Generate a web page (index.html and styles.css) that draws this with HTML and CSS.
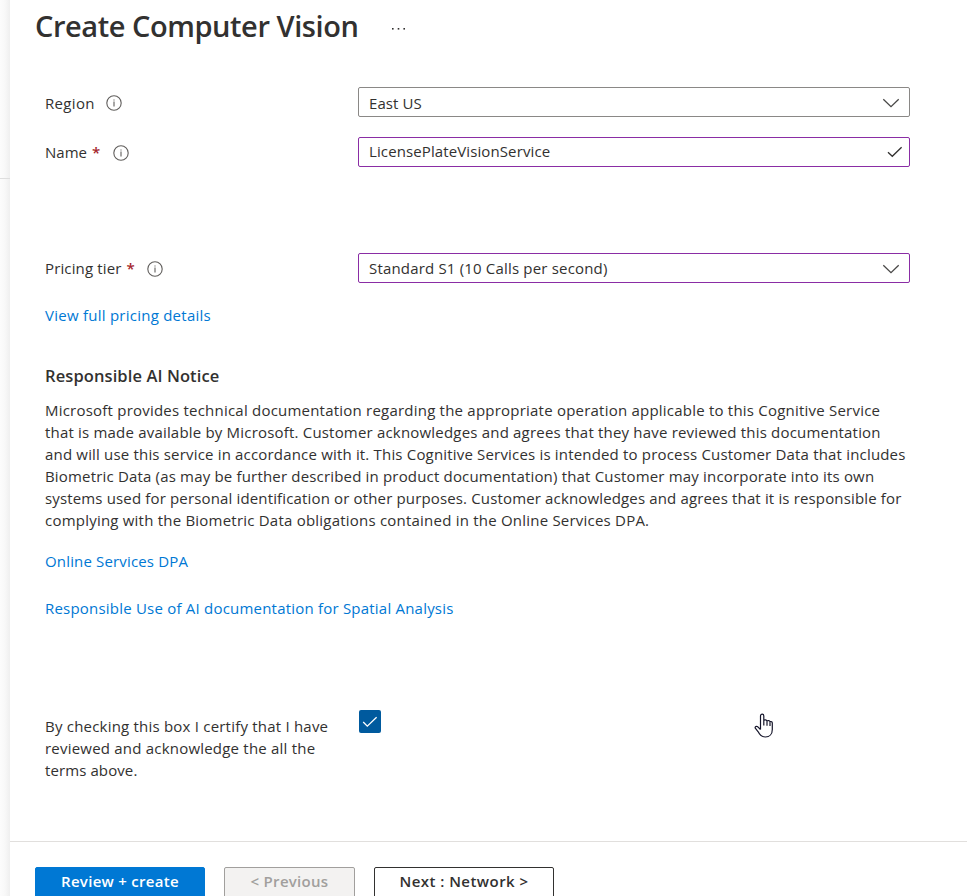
FILE: index.html
```html
<!DOCTYPE html>
<html lang="en">
<head>
<meta charset="utf-8">
<title>Create Computer Vision</title>
<link rel="stylesheet" href="styles.css">
</head>
<body>
<div class="app">
  <aside class="edge"><div class="edge-line"></div></aside>
  <div class="blade">
    <header class="header">
      <h1 class="title">Create Computer Vision</h1>
      <svg class="more" width="16" height="4" viewBox="0 0 16 4" fill="#323130"><rect x="1" y="1" width="1.600" height="1.600"/><rect x="6.700" y="1" width="1.600" height="1.600"/><rect x="12.400" y="1" width="1.600" height="1.600"/></svg>
    </header>

    <main class="content">
      <div class="field">
        <div class="label"><span class="ls-region">Region</span>
          <svg class="info" width="16" height="16" viewBox="0 0 16 16"><circle cx="8" cy="8" r="7.200" fill="none" stroke="#605e5c" stroke-width="1.100"/><path d="M8 6.500V11.500M8 4.500V5.500" stroke="#605e5c" stroke-width="1.100"/></svg>
        </div>
        <div class="input"><span class="ls-east">East US</span>
          <svg class="chevron" width="18" height="10" viewBox="0 0 18 10"><path d="M1.300 1.200L9 8.600L16.700 1.200" fill="none" stroke="#494847" stroke-width="1.300"/></svg>
        </div>
      </div>

      <div class="field field-name">
        <div class="label"><span class="ls-name">Name</span><span class="req">*</span>
          <svg class="info" width="16" height="16" viewBox="0 0 16 16"><circle cx="8" cy="8" r="7.200" fill="none" stroke="#605e5c" stroke-width="1.100"/><path d="M8 6.500V11.500M8 4.500V5.500" stroke="#605e5c" stroke-width="1.100"/></svg>
        </div>
        <div class="input edited"><span class="ls-license">LicensePlateVisionService</span>
          <svg class="valid" width="16" height="12" viewBox="0 0 16 12"><path d="M1 6.200L5.300 10.300L14.600 1.200" fill="none" stroke="#323130" stroke-width="1.300"/></svg>
        </div>
      </div>

      <div class="field field-tier">
        <div class="label"><span class="ls-tier">Pricing tier</span><span class="req">*</span>
          <svg class="info" width="16" height="16" viewBox="0 0 16 16"><circle cx="8" cy="8" r="7.200" fill="none" stroke="#605e5c" stroke-width="1.100"/><path d="M8 6.500V11.500M8 4.500V5.500" stroke="#605e5c" stroke-width="1.100"/></svg>
        </div>
        <div class="input edited"><span class="ls-standard">Standard S1 (10 Calls per second)</span>
          <svg class="chevron" width="18" height="10" viewBox="0 0 18 10"><path d="M1.300 1.200L9 8.600L16.700 1.200" fill="none" stroke="#494847" stroke-width="1.300"/></svg>
        </div>
      </div>

      <a class="link link-pricing">View full pricing details</a>

      <h2 class="notice-title">Responsible AI Notice</h2>
      <p class="notice">
        <span class="line n1">Microsoft provides technical documentation regarding the appropriate operation applicable to this Cognitive Service</span>
        <span class="line n2">that is made available by Microsoft. Customer acknowledges and agrees that they have reviewed this documentation</span>
        <span class="line n3">and will use this service in accordance with it. This Cognitive Services is intended to process Customer Data that includes</span>
        <span class="line n4">Biometric Data (as may be further described in product documentation) that Customer may incorporate into its own</span>
        <span class="line n5">systems used for personal identification or other purposes. Customer acknowledges and agrees that it is responsible for</span>
        <span class="line n6">complying with the Biometric Data obligations contained in the Online Services DPA.</span>
      </p>

      <a class="link link-dpa">Online Services DPA</a>
      <a class="link link-use">Responsible Use of AI documentation for Spatial Analysis</a>

      <div class="confirm">
        <p class="confirm-text">
          <span class="line c1">By checking this box I certify that I have</span>
          <span class="line c2">reviewed and acknowledge the all the</span>
          <span class="line c3">terms above.</span>
        </p>
        <div class="checkbox"><svg width="16" height="12" viewBox="0 0 16 12"><path d="M1.200 6L5.300 10.200L14.600 1.200" fill="none" stroke="#fff" stroke-width="1.300"/></svg></div>
      </div>
    </main>

    <footer class="footer">
      <button class="btn primary">Review + create</button>
      <button class="btn disabled">&lt; Previous</button>
      <button class="btn next">Next : Network &gt;</button>
    </footer>
  </div>
  <svg class="cursor" width="20" height="26" viewBox="0 0 20 26"><path d="M6.500 16.500V3C6.500 .500 9.800 .500 9.800 3V7.300C10.500 6.600 12.500 6.700 13 7.900C14 7.200 15.500 7.500 16 8.600C17.500 8.200 18.300 9 18.300 10.300V16.500C18.300 21 15.500 24 11.500 24C7.500 24 5.500 21.500 4.200 18.800L1.300 15.200C.600 13.700 2.400 12.700 3.800 13.800L6.500 16.500M9.800 7V12.500M13 8V12.800M16 9V13" fill="#fff" stroke="#15152a" stroke-width="1.200" stroke-linejoin="round"/></svg>
</div>
</body>
</html>
```
FILE: styles.css
```css
* { box-sizing: border-box; }
body { margin: 0; background: #fff; color: #323130; font: 15px/22px "Open Sans", sans-serif; overflow: hidden; }
h1, h2, p { margin: 0; }
.app { display: flex; height: 896px; position: relative; overflow: hidden; }
.edge { width: 10px; flex: none; background: linear-gradient(to right, #fcfcfc, #f8f8f8 50%, #efefef); }
.edge-line { height: 179px; border-bottom: 1px solid #dedede; }
.blade { flex: 1; min-width: 0; display: flex; flex-direction: column; }

.header { display: flex; align-items: center; height: 56px; padding-left: 25px; flex: none; }
.title { font-size: 29px; line-height: 40px; font-weight: 600; letter-spacing: -0.44px; white-space: nowrap; width: 356px; padding-bottom: 4px; }
.more { margin-top: 1px; }

.content { padding: 31px 57px 0 35px; height: 785px; flex: none; display: flex; flex-direction: column; align-items: flex-start; }
.field { display: grid; grid-template-columns: 313px 552px; height: 30px; align-items: center; }
.field-name { margin-top: 20px; }
.field-tier { margin-top: 86px; }
.label { display: flex; align-items: center; height: 30px; white-space: nowrap; padding-top: 2px; }
.field-name .label, .field-tier .label { padding-top: 0; }
.info { margin: 0 0 1px 11px; }
.req { color: #a4262c; font-weight: 600; margin-left: 5px; width: 8px; }
.field-name .info { margin: 2px 0 0 13px; }
.field-tier .info { margin: 2px 0 0 12px; }
.input { display: flex; align-items: center; justify-content: space-between; height: 30px; border: 1px solid #8a8886; border-radius: 2px; padding: 2px 9px 0 10px; white-space: nowrap; }
.edited { border-color: #8a2da5; }
.field-name .input { padding: 0 6px 2px 10px; }
.field-tier .input { padding-top: 0; }
.chevron { margin-bottom: 1px; }
.field-tier .chevron { margin: 1px 0 0; }
.valid { margin-top: 2px; }

.link { color: #0078d4; white-space: nowrap; letter-spacing: .21px; }
.link-pricing { margin-top: 21px; letter-spacing: .25px; }
.notice-title { font-size: 16.500px; line-height: 22px; font-weight: 600; letter-spacing: .1px; margin-top: 39px; }
.notice { margin-top: 12px; }
.line { display: block; white-space: nowrap; }
.link-dpa { margin-top: 19px; letter-spacing: .16px; }
.link-use { margin-top: 25px; }
.confirm { display: grid; grid-template-columns: 314px 22px; margin-top: 91px; }
.confirm-text { padding-top: 5px; }
.checkbox { width: 22px; height: 23px; border-radius: 2px; background: #005a9e; display: flex; align-items: center; justify-content: center; }

.ls-region { letter-spacing: .33px; }
.ls-tier { letter-spacing: .14px; }
.ls-east { letter-spacing: .08px; }
.ls-license { letter-spacing: .11px; }
.ls-standard { letter-spacing: .18px; }
.n1 { letter-spacing: .218px; }
.n2 { letter-spacing: .192px; }
.n3 { letter-spacing: .179px; }
.n4 { letter-spacing: .177px; }
.n5 { letter-spacing: .15px; }
.n6 { letter-spacing: .217px; }
.c1, .c2 { letter-spacing: .21px; }
.c3 { letter-spacing: .1px; }

.footer { flex: none; height: 55px; border-top: 1px solid #e1dfdd; padding: 25px 0 0 25px; display: flex; align-items: flex-start; }
.btn { height: 31px; flex: none; border: 1px solid; border-radius: 2px; font: 600 15px/22px "Open Sans", sans-serif; letter-spacing: .29px; padding: 0 0 4px; white-space: nowrap; }
.primary { width: 170px; background: #0078d4; border-color: #0078d4; color: #fff; }
.disabled { width: 131px; margin-left: 19px; background: #f3f2f1; border-color: #a19f9d; color: #a19f9d; }
.next { width: 180px; margin-left: 19px; background: #fff; border-color: #323130; color: #323130; font-weight: 550; letter-spacing: .46px; }
.cursor { position: absolute; left: 754px; top: 713px; }
```
